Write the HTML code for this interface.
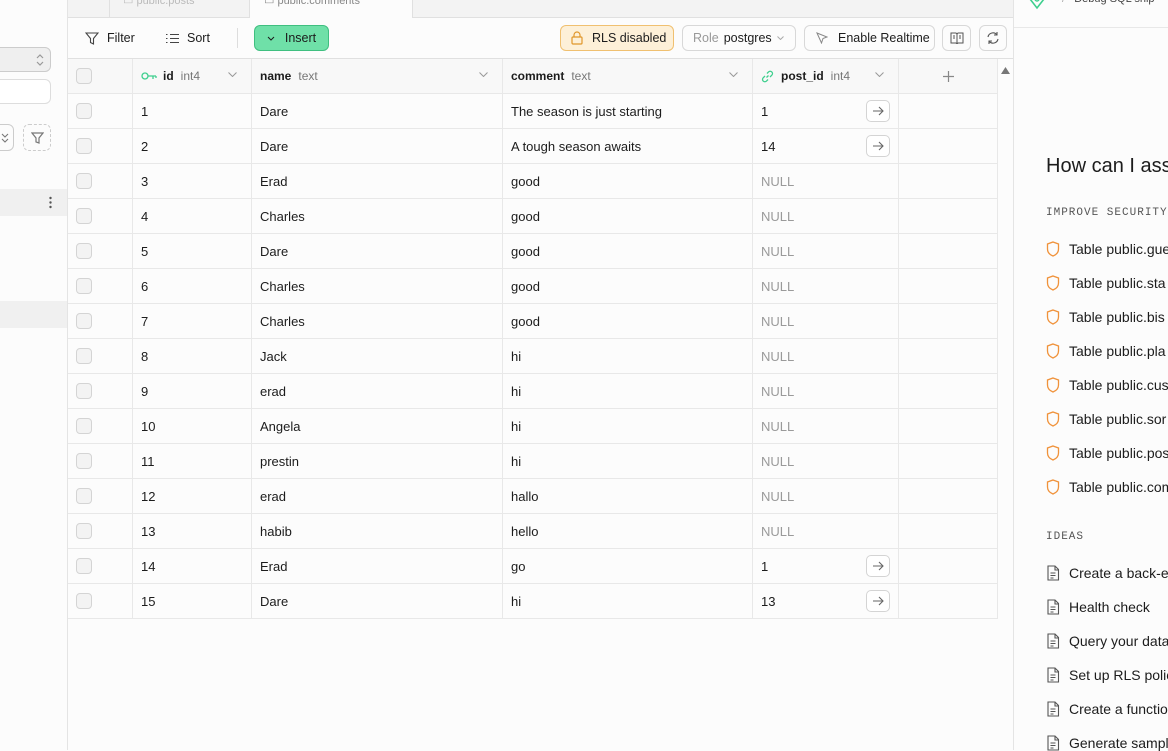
<!DOCTYPE html><html><head><style>
*{box-sizing:border-box;margin:0;padding:0}
body{width:1168px;height:750px;overflow:hidden;background:#fcfcfc;font-family:"Liberation Sans",sans-serif;font-size:13px;color:#1c1c1c;position:relative}
.abs{position:absolute}
svg{display:block;flex:none}
.sb{left:0;top:0;width:68px;height:750px;background:#fcfcfc;border-right:1px solid #e4e4e4}
.tabs{left:68px;top:0;width:945px;height:18px;background:#f3f3f3;border-bottom:1px solid #e0e0e0}
.tb{left:68px;top:18px;width:945px;height:41px;background:#fcfcfc;border-bottom:1px solid #e0e0e0}
.btn{position:absolute;height:26px;top:25px;border:1px solid #d8d8d8;border-radius:6px;background:#fcfcfc;font-size:12.5px;display:flex;align-items:center;padding:0 8px;gap:7px;white-space:nowrap}
.grid{left:68px;top:59px;width:930px}
.row{display:flex;height:35px;border-bottom:1px solid #e8e8e8;background:#fcfcfc}
.row>div{border-right:1px solid #e8e8e8;display:flex;align-items:center;padding-left:8px;position:relative}
.hd{background:#f8f8f8;font-size:12px}
.c0{width:65px;justify-content:center;padding-left:0!important}
.c1{width:119px}.c2{width:251px}.c3{width:250px}.c4{width:146px}.c5{width:99px}
.cb{width:16px;height:16px;border:1px solid #d4d4d4;border-radius:4px;background:#f3f3f3;position:absolute;left:8px}
.null{color:#9a9a9a}
.ar{position:absolute;right:8px;top:6px;width:24px;height:22px;border:1px solid #d4d4d4;border-radius:5px;background:#fff;display:flex;align-items:center;justify-content:center}
.ty{color:#777;margin-left:7px;font-weight:normal}
.dd{position:absolute;right:14px;top:13px}
.rp{left:1013px;top:0;width:155px;height:750px;background:#fcfcfc;border-left:1px solid #e4e4e4}
.it{position:absolute;left:32px;font-size:14px;white-space:nowrap;display:flex;align-items:center;gap:9px}
.mono{font-family:"Liberation Mono",monospace;font-size:11px;color:#555;letter-spacing:1px}
</style></head><body>
<div class="abs sb">
 <div class="abs" style="left:-10px;top:47px;width:61px;height:25px;border:1px solid #ccc;border-radius:6px;background:#efefef"><svg style="position:absolute;right:6px;top:6px" width="8" height="12" viewBox="0 0 8 12"><path d="M1 4l3-3 3 3M1 8l3 3 3-3" fill="none" stroke="#999" stroke-width="1.2"/></svg></div>
 <div class="abs" style="left:-10px;top:79px;width:61px;height:25px;border:1px solid #ddd;border-radius:6px;background:#fff"></div>
 <div class="abs" style="left:-10px;top:124px;width:24px;height:27px;border:1px solid #ccc;border-radius:6px"><svg style="position:absolute;left:10px;top:7px" width="8" height="12" viewBox="0 0 8 12"><path d="M1 2l3 3 3-3M1 7l3 3 3-3" fill="none" stroke="#777" stroke-width="1.1"/></svg></div>
 <div class="abs" style="left:23px;top:124px;width:28px;height:27px;border:1px dashed #ccc;border-radius:6px"><svg style="position:absolute;left:7px;top:7px" width="13" height="12" viewBox="0 0 13 12"><path d="M1 1h11L8 6v5L5 10V6z" fill="none" stroke="#777" stroke-width="1.2"/></svg></div>
 <div class="abs" style="left:0;top:189px;width:67px;height:27px;background:#f0f0f0"><svg style="position:absolute;left:49px;top:7px" width="3" height="13"><circle cx="1.5" cy="2" r="1.2" fill="#555"/><circle cx="1.5" cy="6.5" r="1.2" fill="#555"/><circle cx="1.5" cy="11" r="1.2" fill="#555"/></svg></div>
 <div class="abs" style="left:0;top:301px;width:67px;height:27px;background:#f0f0f0"></div>
</div>
<div class="abs tabs">
 <div class="abs" style="left:41px;top:0;width:1px;height:18px;background:#e0e0e0"></div>
 <div class="abs" style="left:55px;top:-6px;color:#bbb;font-size:11px">▭ public.posts</div>
 <div class="abs" style="left:181px;top:-1px;width:164px;height:19px;background:#fcfcfc;border-left:1px solid #e0e0e0;border-right:1px solid #e0e0e0"><span style="position:absolute;left:14px;top:-5px;color:#888;font-size:11px">▭ public.comments</span></div>
</div>
<div class="abs tb"></div>
<div class="abs" style="left:85px;top:31px;font-size:12.5px;display:flex;gap:8px;align-items:center"><svg width="14" height="13" viewBox="0 0 14 13"><path d="M1 1h12L8.5 6.5V12L5.5 10.5V6.5z" fill="none" stroke="#444" stroke-width="1.1"/></svg>Filter</div>
<div class="abs" style="left:166px;top:31px;font-size:12.5px;display:flex;gap:8px;align-items:center"><svg width="13" height="11" viewBox="0 0 13 11"><path d="M0 1.5h1.5M0 5.5h1.5M0 9.5h1.5M4 1.5h9M4 5.5h9M4 9.5h9" stroke="#444" stroke-width="1.1"/></svg>Sort</div>
<div class="abs" style="left:237px;top:28px;width:1px;height:20px;background:#ddd"></div>
<div class="btn" style="left:254px;width:75px;background:#6fe0a8;border-color:#3fbf80;justify-content:center;gap:10px"><svg width="8" height="5"><path d="M1 1l3 3 3-3" fill="none" stroke="#1c1c1c" stroke-width="1"/></svg>Insert</div>
<div class="btn" style="left:560px;width:114px;background:#fdf0d8;border-color:#f0c070;gap:9px;padding-left:10px"><svg width="12" height="14" viewBox="0 0 12 14"><rect x="1" y="6" width="10" height="7" rx="1" fill="none" stroke="#e0962a" stroke-width="1.2"/><path d="M3 6V4a3 3 0 016 0v2" fill="none" stroke="#e0962a" stroke-width="1.2"/></svg>RLS disabled</div>
<div class="btn" style="left:682px;width:114px;gap:5px;padding-left:10px"><span style="color:#999">Role</span> postgres <svg width="7" height="4"><path d="M.5.5l3 3 3-3" fill="none" stroke="#aaa"/></svg></div>
<div class="btn" style="left:804px;width:131px;gap:10px;padding-left:11px"><svg width="12" height="12" viewBox="0 0 12 12"><path d="M1 1l10 4-4 1.5L5.5 11z" fill="none" stroke="#888" stroke-width="1"/></svg>Enable Realtime</div>
<div class="btn" style="left:942px;width:29px;padding:0;justify-content:center"><svg width="14" height="12" viewBox="0 0 14 12"><path d="M1 1h5l1 1 1-1h5v10H8l-1 1-1-1H1zM7 2v9M3 4h2M3 6h2M9 4h2M9 6h2" fill="none" stroke="#555" stroke-width="1"/></svg></div>
<div class="btn" style="left:979px;width:28px;padding:0;justify-content:center"><svg width="14" height="14" viewBox="0 0 14 14"><path d="M2 6a5 5 0 019-2M12 8a5 5 0 01-9 2M11 1v3H8M3 13v-3h3" fill="none" stroke="#555" stroke-width="1.1"/></svg></div>
<div class="abs grid">
<div class="row hd"><div class="c0"><span class="cb"></span></div>
<div class="c1"><svg style="margin-right:6px" width="16" height="8" viewBox="0 0 16 8"><circle cx="4" cy="4" r="3" fill="none" stroke="#3ecf8e" stroke-width="1.3"/><path d="M7 4h8M12 4v3M15 4v2" stroke="#3ecf8e" stroke-width="1.3" fill="none"/></svg><b>id</b><span class="ty">int4</span><svg class="dd" width="9" height="5"><path d="M.5.5l4 4 4-4" fill="none" stroke="#999"/></svg></div>
<div class="c2"><b>name</b><span class="ty">text</span><svg class="dd" width="9" height="5"><path d="M.5.5l4 4 4-4" fill="none" stroke="#999"/></svg></div>
<div class="c3"><b>comment</b><span class="ty">text</span><svg class="dd" width="9" height="5"><path d="M.5.5l4 4 4-4" fill="none" stroke="#999"/></svg></div>
<div class="c4"><svg style="margin-right:7px" width="13" height="13" viewBox="0 0 13 13"><path d="M5.5 7.5l2-2M4 6L2.2 7.8a2.3 2.3 0 003.3 3.3L7 9.5M9 7l1.8-1.8a2.3 2.3 0 00-3.3-3.3L6 3.5" fill="none" stroke="#3ecf8e" stroke-width="1.3"/></svg><b>post_id</b><span class="ty">int4</span><svg class="dd" width="9" height="5"><path d="M.5.5l4 4 4-4" fill="none" stroke="#999"/></svg></div>
<div class="c5" style="justify-content:center;padding:0"><svg width="11" height="11"><path d="M5.5 0v11M0 5.5h11" stroke="#888" stroke-width="1.2"/></svg></div></div>
<div id="rows"></div>
</div>
<svg class="abs" style="left:1001px;top:67px" width="9" height="7"><path d="M4.5 0L9 7H0z" fill="#777"/></svg>
<div class="abs rp">
 <div class="abs" style="left:0;top:27px;width:155px;height:1px;background:#e8e8e8"></div>
 <svg class="abs" style="left:14px;top:-4px" width="18" height="14" viewBox="0 0 18 14"><path d="M2 3l7 9 7-9" fill="none" stroke="#3ecf8e" stroke-width="1.6"/><circle cx="9" cy="3" r="2" fill="none" stroke="#3ecf8e" stroke-width="1.4"/></svg>
 <div class="abs" style="left:48px;top:-7px;color:#aaa;font-size:11px">/ &nbsp;&nbsp;<span style="color:#444">Debug SQL snip</span></div>
 <div class="abs" style="left:32px;top:155px;font-size:20px;white-space:nowrap">How can I assist</div>
 <div class="abs mono" style="left:32px;top:207px">IMPROVE SECURITY</div>
 <div class="abs mono" style="left:32px;top:531px">IDEAS</div>
 <div id="items"></div>
</div>
<script>
var d=[[1,"Dare","The season is just starting","1"],[2,"Dare","A tough season awaits","14"],[3,"Erad","good",""],[4,"Charles","good",""],[5,"Dare","good",""],[6,"Charles","good",""],[7,"Charles","good",""],[8,"Jack","hi",""],[9,"erad","hi",""],[10,"Angela","hi",""],[11,"prestin","hi",""],[12,"erad","hallo",""],[13,"habib","hello",""],[14,"Erad","go","1"],[15,"Dare","hi","13"]];
var arr='<span class="ar"><svg width="12" height="10" viewBox="0 0 12 10"><path d="M1 5h10M7 1l4 4-4 4" fill="none" stroke="#666" stroke-width="1.1"/></svg></span>';
var h="";d.forEach(function(r){h+='<div class="row"><div class="c0"><span class="cb"></span></div><div class="c1">'+r[0]+'</div><div class="c2">'+r[1]+'</div><div class="c3">'+r[2]+'</div><div class="c4">'+(r[3]?r[3]+arr:'<span class="null">NULL</span>')+'</div><div class="c5"></div></div>'});
document.getElementById("rows").innerHTML=h;
var sh='<svg width="14" height="16" viewBox="0 0 14 16"><path d="M7 1l5.5 2v5c0 3.5-2.5 5.8-5.5 7C4 13.8 1.5 11.5 1.5 8V3z" fill="none" stroke="#f0923a" stroke-width="1.3"/></svg>';
var dc='<svg width="14" height="16" viewBox="0 0 14 16"><path d="M2 1h7l3.5 3.5V15H2zM9 1v4h3.5M4.5 8h5M4.5 10.5h5M4.5 13h3" fill="none" stroke="#555" stroke-width="1.1"/></svg>';
var s=["gue","sta","bis","pla","cus","sor","pos","com"],o="";
s.forEach(function(t,i){o+='<div class="it" style="top:'+(241+i*34)+'px">'+sh+'Table public.'+t+'</div>'});
["Create a back-e","Health check","Query your data","Set up RLS polic","Create a functio","Generate sampl"].forEach(function(t,i){o+='<div class="it" style="top:'+(565+i*34)+'px">'+dc+t+'</div>'});
document.getElementById("items").innerHTML=o;
</script>
</body></html>
